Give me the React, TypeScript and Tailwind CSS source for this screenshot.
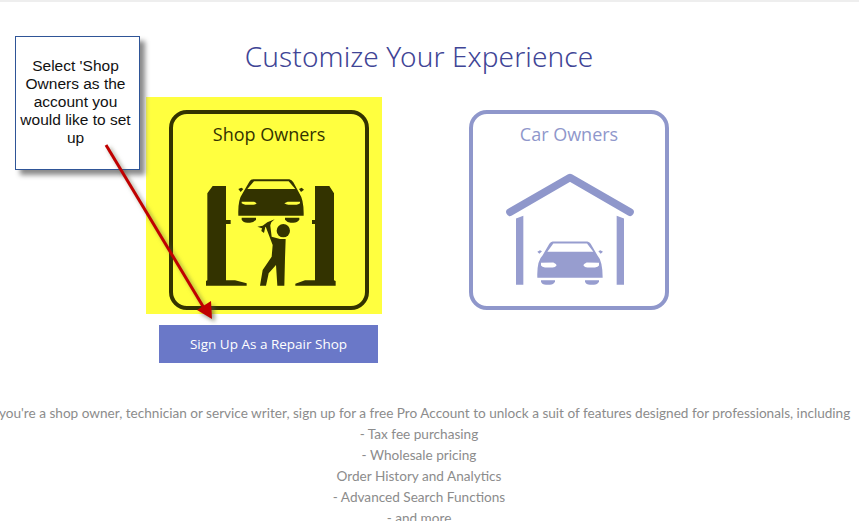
const BODY_LINES = ["- Tax fee purchasing", "- Wholesale pricing", "Order History and Analytics", "- Advanced Search Functions", "- and more"];

function CarShape() {
  return (
    <g>
      <path fillRule="evenodd" d="M190 13 L298 13 Q305 14 310 22 L328 55 Q342 75 341 122 L145 122 Q143 75 158 55 L178 20 Q182 13 190 13 Z M192 19 L172 42 L316 42 L296 19 Z M155 80 L192 80 Q200 83 200 85 Q196 89 190 89 L166 89 Q158 88 155 85 Z M330 80 L293 80 Q285 83 283 85 Q288 89 295 89 L320 89 Q328 88 330 85 Z" />
      <path d="M155 128 H198 V134 Q190 143 180 143 H172 Q160 143 155 134 Z M285 128 H328 V134 Q322 143 310 143 H302 Q292 143 285 134 Z" />
      <path d="M145 42 L154 38 L160 42 L152 51 Z M327 42 L335 38 L342 44 L333 51 Z" />
    </g>
  );
}

function LiftIcon() {
  return (
    <svg viewBox="0 0 480 360" className="h-[120px] w-[160px] fill-[#333300]">
      <path d="M52 55 L68 33 H108 V135 H122 V147 H108 V316 H135 L170 325 V332 H48 V318 L52 316 Z" />
      <path d="M375 33 H418 L432 55 V316 L437 318 V332 H316 V326 L345 316 H375 V147 H366 V135 H375 Z" />
      <CarShape />
      <circle cx="280" cy="167" r="20" />
      <path d="M245 185 L270 192 L287 192 L285 250 L283 332 L262 332 L258 270 L236 295 L228 332 L210 332 L218 285 L245 245 L248 210 L226 152 L240 145 Z" />
      <path d="M202 155 L218 152 L232 142 L254 133 L244 142 L240 152 L226 156 L222 174 L214 168 L216 160 Z" />
    </svg>
  );
}

function GarageIcon() {
  return (
    <svg viewBox="135 210 390 350" className="h-[117px] w-[130px] fill-[#979dcf]">
      <path d="M150 339 L330 235 L510 339" fill="none" stroke="#8f97cb" strokeWidth="23" strokeLinecap="round" strokeLinejoin="round" />
      <path d="M168 358 L190 350 V557 H168 Z M470 350 L492 358 V557 H470 Z" />
      <path fillRule="evenodd" d="M278 427 H382 Q388 428 392 434 L412 468 Q428 485 428 536 L232 536 Q230 485 248 468 L268 434 Q272 428 278 427 Z M280 433 L262 458 L400 458 L381 433 Z M243 491 L280 490 Q290 495 290 498 Q286 505 278 505 L255 505 Q246 504 243 499 Z M417 491 L380 490 Q370 495 370 498 Q374 505 382 505 L405 505 Q414 504 417 499 Z" />
      <path d="M243 543 H285 V548 Q280 557 270 557 H258 Q246 557 243 548 Z M375 543 H417 V548 Q412 557 402 557 H390 Q378 557 375 548 Z" />
      <path d="M232 458 L240 453 L246 456 L238 464 Z M415 456 L421 453 L429 458 L422 464 Z" />
    </svg>
  );
}

function Callout() {
  return (
    <div className="absolute left-[15px] top-[36px] z-10 flex h-[134px] w-[125px] items-center justify-center border border-[#2f5597] bg-white pb-[3px] pl-[2px] pr-[6px] text-center font-['Liberation_Sans',sans-serif] text-[15.5px] leading-[18px] text-[#111111] shadow-[5px_5px_5px_#8a8a8a]">
      Select 'Shop Owners as the account you would like to set up
    </div>
  );
}

function Arrow() {
  return (
    <svg viewBox="0 0 859 521" className="pointer-events-none absolute left-0 top-0 z-20 h-[521px] w-[859px] drop-shadow-[3px_3px_2px_rgba(90,90,60,0.6)]">
      <line x1="106" y1="145" x2="204" y2="308" stroke="#c00000" strokeWidth="3" />
      <path d="M212 319 L197 310 L211 301 Z" fill="#c00000" />
    </svg>
  );
}

export default function App() {
  return (
    <div className="relative h-[521px] w-[859px] overflow-hidden bg-white font-['Open_Sans',sans-serif]">
      <Callout />
      <Arrow />
      <div className="h-[2px] bg-[#eeeeee]" />
      <div className="w-[838px]">
        <h1 className="mt-[35px] text-center font-['Noto_Sans',sans-serif] text-[28px] font-light leading-[38px] tracking-[0.1px] text-[#3f4596]">
          Customize Your Experience
        </h1>

        <div className="mt-[35px] flex justify-center gap-[100px]">
          <div className="relative flex w-[200px] flex-col">
            <div className="absolute left-[-23px] top-[-13px] h-[217px] w-[236px] bg-[#ffff3f]" />
            <div className="relative flex h-[200px] w-[200px] flex-col items-center rounded-[18px] border-4 border-[#333300] text-[#333300]">
              <p className="mt-[7px] text-[18px] leading-[26px]">Shop Owners</p>
              <div className="ml-[2px] mt-[28px]">
                <LiftIcon />
              </div>
            </div>
            <button className="relative ml-[-10px] mt-[15px] h-[38px] w-[219px] shrink-0 bg-[#6a78c8] text-[13.5px] font-medium text-white">
              Sign Up As a Repair Shop
            </button>
          </div>

          <div className="flex h-[200px] w-[200px] flex-col items-center rounded-[18px] border-4 border-[#8f97cb] text-[#8f97cb]">
            <p className="mt-[7px] text-[18px] leading-[26px]">Car Owners</p>
            <div className="ml-[2px] mt-[22px]">
              <GarageIcon />
            </div>
          </div>
        </div>

        <div className="mt-[40px] flex flex-col items-center whitespace-nowrap font-['Lato',sans-serif] text-[13.6px] leading-[21px] text-[#8c8c8c]">
          <p>If you're a shop owner, technician or service writer, sign up for a free Pro Account to unlock a suit of features designed for professionals, including</p>
          {BODY_LINES.map((line) => (
            <p key={line}>{line}</p>
          ))}
        </div>
      </div>
    </div>
  );
}
